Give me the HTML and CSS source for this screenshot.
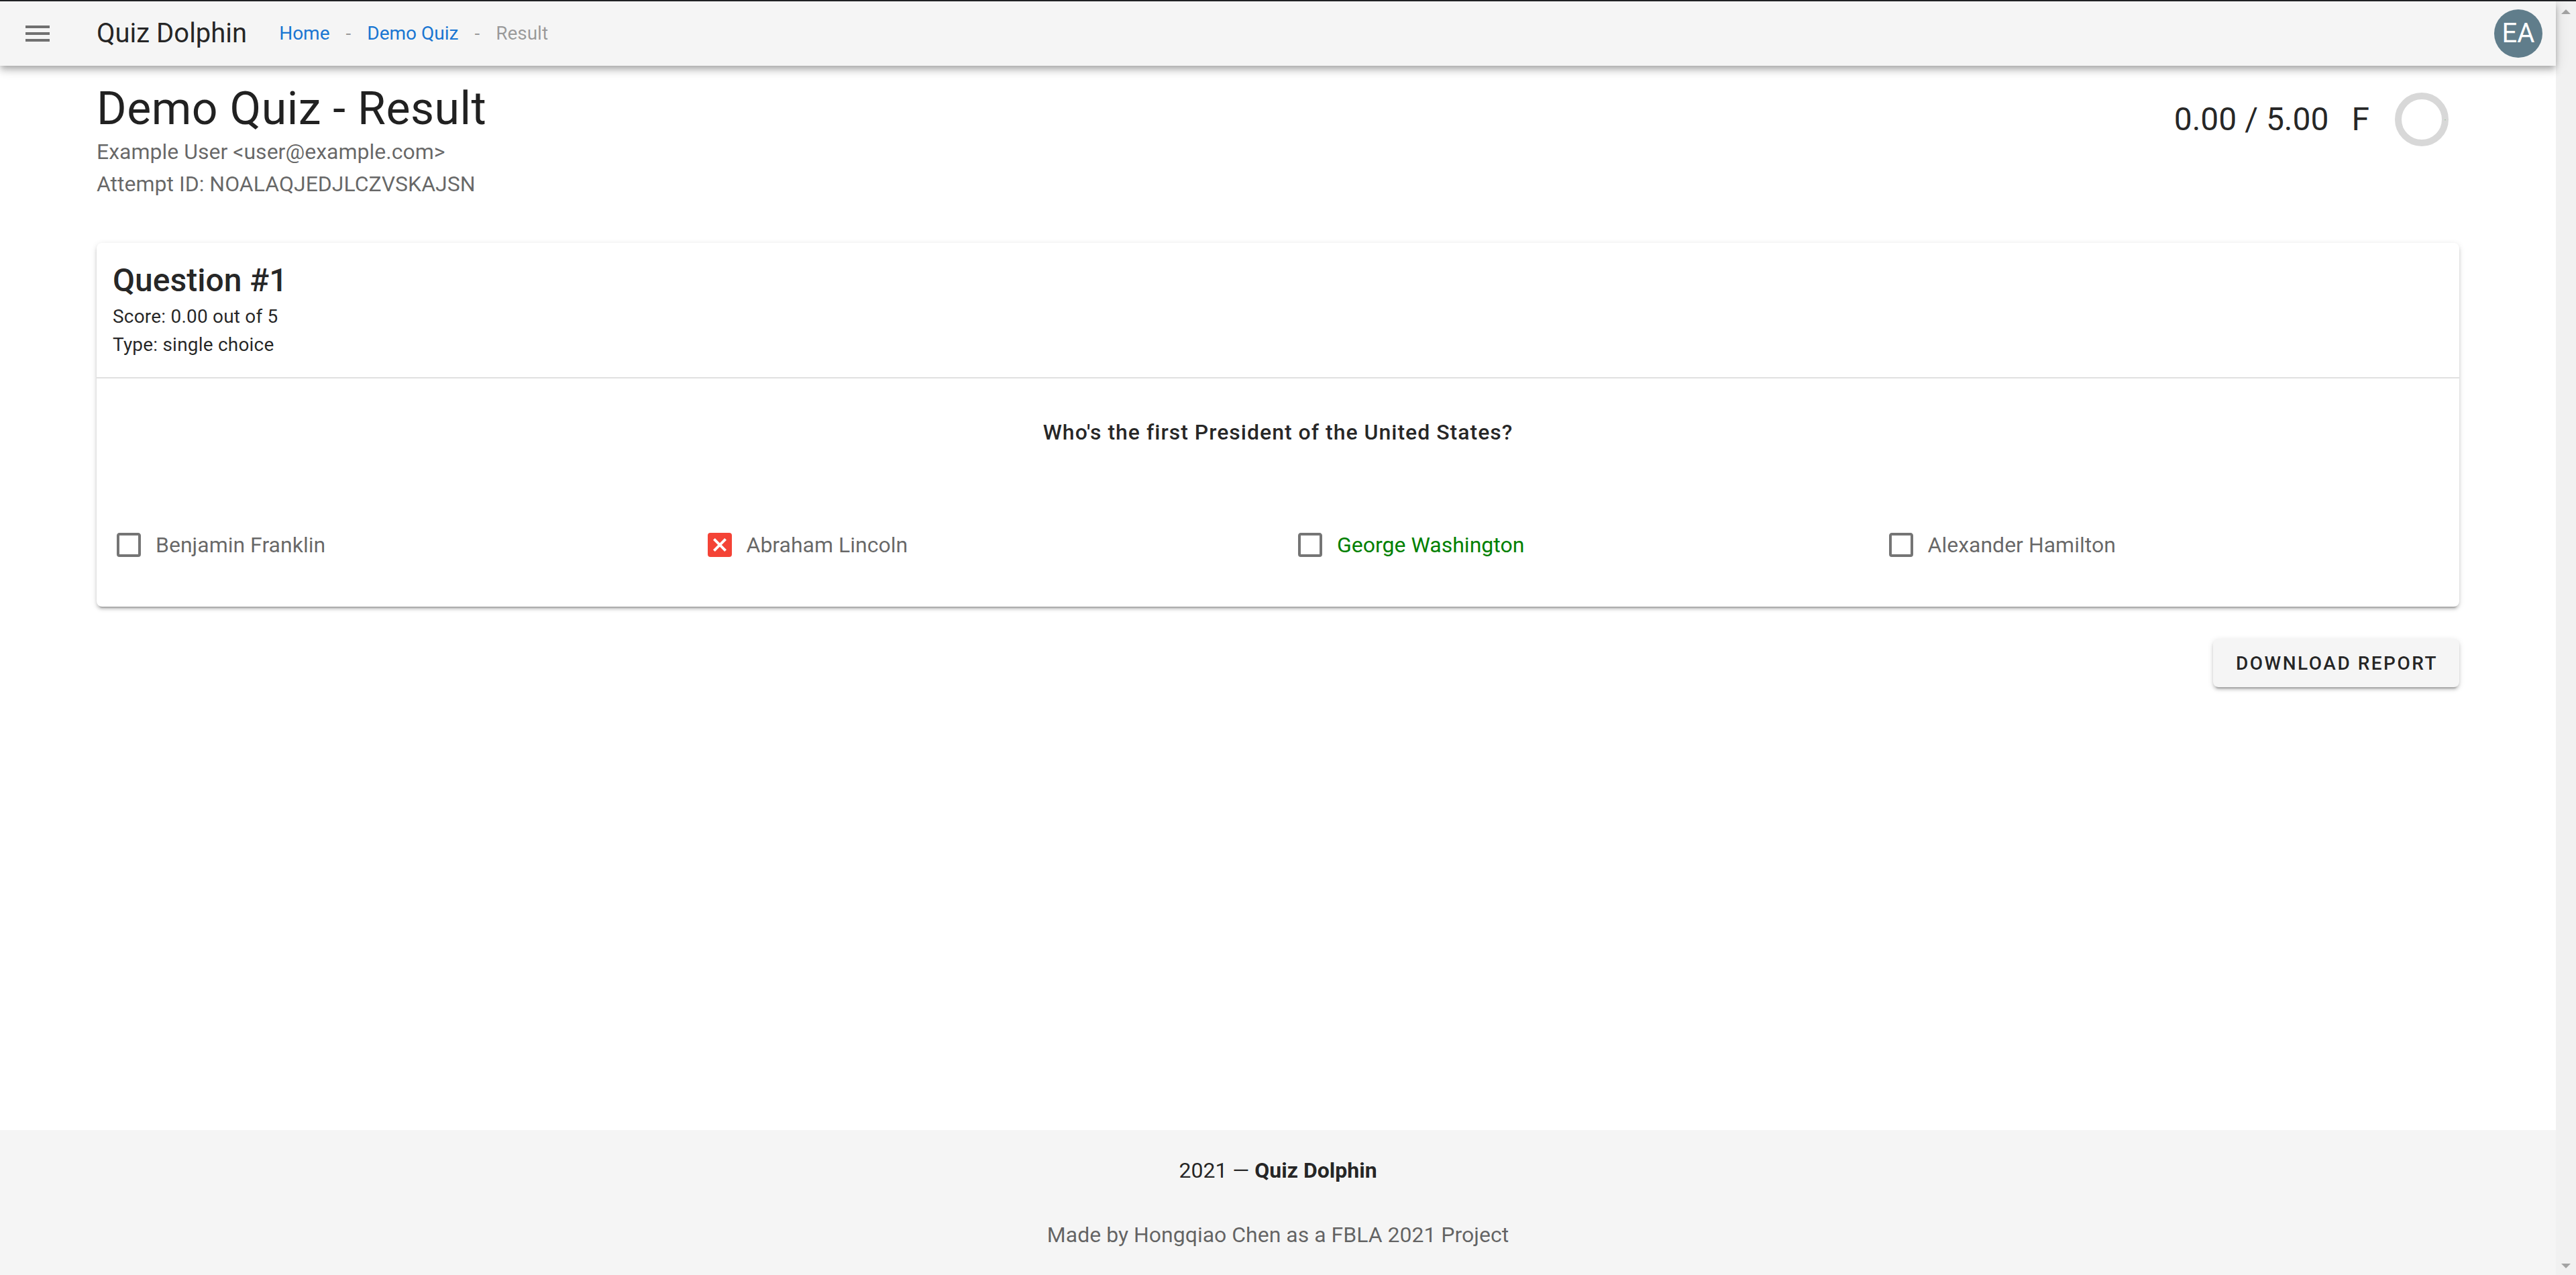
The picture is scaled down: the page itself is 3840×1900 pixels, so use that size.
FILE: index.html
```html
<!DOCTYPE html>
<html lang="en">
<head>
<meta charset="utf-8">
<title>Demo Quiz - Result | Quiz Dolphin</title>
<link rel="stylesheet" href="styles.css">
</head>
<body>
<div class="frame">
  <div class="app">
    <header class="appbar">
      <button class="nav-btn" aria-label="Menu">
        <svg class="icon" viewBox="0 0 24 24"><path d="M3,6H21V8H3V6M3,11H21V13H3V11M3,16H21V18H3V16Z"/></svg>
      </button>
      <div class="brand">Quiz Dolphin</div>
      <ul class="crumbs">
        <li><a class="crumb-link">Home</a></li>
        <li class="crumb-div">-</li>
        <li><a class="crumb-link">Demo Quiz</a></li>
        <li class="crumb-div">-</li>
        <li class="crumb-off">Result</li>
      </ul>
      <div class="spacer"></div>
      <div class="avatar">EA</div>
    </header>

    <main class="main">
      <div class="container">
        <div class="head-row">
          <div class="head-info">
            <h1 class="page-title">Demo Quiz - Result</h1>
            <div class="sub">Example User &lt;user@example.com&gt;</div>
            <div class="sub">Attempt ID: NOALAQJEDJLCZVSKAJSN</div>
          </div>
          <div class="score">
            <span class="score-num">0.00 / 5.00</span>
            <span class="grade">F</span>
            <svg class="ring" viewBox="0 0 40 40">
              <circle cx="20" cy="20" r="17.5" class="ring-under"/>
              <circle cx="20" cy="20" r="17.5" class="ring-val"/>
            </svg>
          </div>
        </div>

        <section class="card">
          <div class="card-head">
            <h2 class="q-title">Question #1</h2>
            <div class="q-meta">Score: 0.00 out of 5</div>
            <div class="q-meta q-meta-2">Type: single choice</div>
          </div>
          <div class="card-body">
            <p class="q-text">Who's the first President of the United States?</p>
            <div class="options">
              <div class="option">
                <svg class="icon cb" viewBox="0 0 24 24"><path d="M19,3H5C3.89,3 3,3.89 3,5V19A2,2 0 0,0 5,21H19A2,2 0 0,0 21,19V5C21,3.89 20.1,3 19,3M19,5V19H5V5H19Z"/></svg>
                <span class="opt-label">Benjamin Franklin</span>
              </div>
              <div class="option">
                <svg class="icon cb cb-wrong" viewBox="0 0 24 24"><path d="M19,3H5A2,2 0 0,0 3,5V19A2,2 0 0,0 5,21H19A2,2 0 0,0 21,19V5A2,2 0 0,0 19,3M15.6,17L12,13.4L8.4,17L7,15.6L10.6,12L7,8.4L8.4,7L12,10.6L15.6,7L17,8.4L13.4,12L17,15.6L15.6,17Z"/></svg>
                <span class="opt-label">Abraham Lincoln</span>
              </div>
              <div class="option">
                <svg class="icon cb" viewBox="0 0 24 24"><path d="M19,3H5C3.89,3 3,3.89 3,5V19A2,2 0 0,0 5,21H19A2,2 0 0,0 21,19V5C21,3.89 20.1,3 19,3M19,5V19H5V5H19Z"/></svg>
                <span class="opt-label opt-correct">George Washington</span>
              </div>
              <div class="option">
                <svg class="icon cb" viewBox="0 0 24 24"><path d="M19,3H5C3.89,3 3,3.89 3,5V19A2,2 0 0,0 5,21H19A2,2 0 0,0 21,19V5C21,3.89 20.1,3 19,3M19,5V19H5V5H19Z"/></svg>
                <span class="opt-label">Alexander Hamilton</span>
              </div>
            </div>
          </div>
        </section>

        <div class="actions">
          <button class="btn">Download Report</button>
        </div>
      </div>
    </main>

    <footer class="footer">
      <div class="foot-line">2021 — <strong>Quiz Dolphin</strong></div>
      <div class="foot-made">Made by Hongqiao Chen as a FBLA 2021 Project</div>
    </footer>
  </div>

  <div class="scrollbar">
    <span class="arrow-up"></span>
    <span class="arrow-down"></span>
  </div>
</div>
</body>
</html>
```

FILE: styles.css
```css
html {
  zoom: 2;
}

* {
  box-sizing: border-box;
}

body {
  margin: 0;
  font-family: Roboto, "Liberation Sans", Arial, sans-serif;
  color: rgba(0, 0, 0, 0.87);
  background: #ffffff;
  line-height: 1.5;
}

.frame {
  display: flex;
  height: 950px;
  border-top: 1px solid #202124;
  overflow: hidden;
}

.app {
  flex: 1;
  display: flex;
  flex-direction: column;
  min-width: 0;
}

/* App bar */
.appbar {
  position: relative;
  z-index: 2;
  height: 48px;
  flex: none;
  display: flex;
  align-items: center;
  padding: 0 16px 0 4px;
  background: #f5f5f5;
  box-shadow: 0 2px 4px -1px rgba(0, 0, 0, 0.2), 0 4px 5px 0 rgba(0, 0, 0, 0.14), 0 1px 10px 0 rgba(0, 0, 0, 0.12);
}

.nav-btn {
  width: 48px;
  height: 48px;
  border: 0;
  padding: 0;
  background: transparent;
  display: flex;
  align-items: center;
  justify-content: center;
}

.icon {
  width: 24px;
  height: 24px;
  fill: rgba(0, 0, 0, 0.54);
  display: block;
}

.brand {
  margin-left: 20px;
  font-size: 20px;
  line-height: 30px;
  color: rgba(0, 0, 0, 0.87);
}

.crumbs {
  list-style: none;
  margin: 0 0 0 24px;
  padding: 0;
  display: flex;
  align-items: center;
  font-size: 14px;
  line-height: 20px;
}

.crumb-link {
  color: #1976d2;
  text-decoration: none;
}

.crumb-div {
  padding: 0 12px;
  color: rgba(0, 0, 0, 0.38);
}

.crumb-off {
  color: rgba(0, 0, 0, 0.38);
}

.spacer {
  flex: 1;
}

.avatar {
  width: 36px;
  height: 36px;
  margin-right: -6px;
  border-radius: 50%;
  background: #607d8b;
  color: #ffffff;
  font-size: 20px;
  line-height: 36px;
  text-align: center;
}

/* Main */
.main {
  flex: 1;
  min-height: 0;
}

.container {
  max-width: 1785px;
  margin: 0 auto;
  padding: 12px;
}

.head-row {
  display: flex;
  justify-content: space-between;
  align-items: flex-start;
}

.page-title {
  margin: 0;
  font-size: 34px;
  line-height: 40px;
  font-weight: 400;
  letter-spacing: 0.0073529412em;
  color: rgba(0, 0, 0, 0.87);
}

.sub {
  font-size: 16px;
  line-height: 24px;
  color: rgba(0, 0, 0, 0.6);
}

.score {
  display: flex;
  align-items: center;
  margin-top: 8px;
  margin-right: 8px;
  font-size: 24px;
  line-height: 32px;
  color: rgba(0, 0, 0, 0.87);
}

.grade {
  margin-left: 17px;
}

.ring {
  width: 40px;
  height: 40px;
  margin-left: 19px;
  display: block;
}

.ring-under {
  fill: none;
  stroke: #d8d8d8;
  stroke-width: 5;
}

.ring-val {
  fill: none;
  stroke: #4caf50;
  stroke-width: 0.4;
  stroke-dasharray: 0.6 200;
}

/* Card */
.card {
  margin-top: 32px;
  background: #ffffff;
  border-radius: 4px;
  box-shadow: 0 3px 1px -2px rgba(0, 0, 0, 0.2), 0 2px 2px 0 rgba(0, 0, 0, 0.14), 0 1px 5px 0 rgba(0, 0, 0, 0.12);
}

.card-head {
  padding: 12px 12px 14px;
  border-bottom: 1px solid rgba(0, 0, 0, 0.12);
}

.q-title {
  margin: 0 0 1px;
  font-size: 24px;
  line-height: 32px;
  font-weight: 500;
  color: rgba(0, 0, 0, 0.87);
}

.q-meta {
  font-size: 14px;
  line-height: 20px;
  letter-spacing: 0.1px;
  color: rgba(0, 0, 0, 0.87);
}

.q-meta-2 {
  margin-top: 1px;
}

.card-body {
  padding: 28px 12px 34px;
}

.q-text {
  margin: 0;
  text-align: center;
  font-size: 16px;
  line-height: 24px;
  font-weight: 500;
  letter-spacing: 0.5px;
  color: rgba(0, 0, 0, 0.87);
}

.options {
  margin-top: 60px;
  display: grid;
  grid-template-columns: repeat(4, 1fr);
  column-gap: 24px;
}

.option {
  display: flex;
  align-items: center;
  height: 24px;
}

.cb-wrong {
  fill: #f44336;
}

.opt-label {
  margin-left: 8px;
  font-size: 16px;
  line-height: 24px;
  color: rgba(0, 0, 0, 0.6);
}

.opt-correct {
  color: #008000;
}

/* Actions */
.actions {
  display: flex;
  justify-content: flex-end;
  margin-top: 24px;
}

.btn {
  height: 36px;
  padding: 0 16px 0 17px;
  border: 0;
  border-radius: 4px;
  background: #f5f5f5;
  font-family: Roboto, "Liberation Sans", Arial, sans-serif;
  font-size: 14px;
  font-weight: 500;
  letter-spacing: 0.0892857143em;
  text-transform: uppercase;
  color: rgba(0, 0, 0, 0.87);
  box-shadow: 0 3px 1px -2px rgba(0, 0, 0, 0.2), 0 2px 2px 0 rgba(0, 0, 0, 0.14), 0 1px 5px 0 rgba(0, 0, 0, 0.12);
}

/* Footer */
.footer {
  flex: none;
  height: 108px;
  background: #f5f5f5;
  text-align: center;
  padding-top: 18px;
  font-size: 16px;
  line-height: 24px;
}

.foot-line {
  color: rgba(0, 0, 0, 0.87);
}

.foot-line strong {
  font-weight: 700;
}

.foot-made {
  margin-top: 24px;
  color: rgba(0, 0, 0, 0.6);
}

/* Scrollbar track */
.scrollbar {
  flex: none;
  width: 15px;
  background: #f1f1f1;
  display: flex;
  flex-direction: column;
  justify-content: space-between;
  align-items: center;
  padding: 6px 0 5px;
}

.arrow-up {
  width: 0;
  height: 0;
  border-left: 3.5px solid transparent;
  border-right: 3.5px solid transparent;
  border-bottom: 3.5px solid #a3a3a3;
}

.arrow-down {
  width: 0;
  height: 0;
  border-left: 3.5px solid transparent;
  border-right: 3.5px solid transparent;
  border-top: 3.5px solid #a3a3a3;
}
```
